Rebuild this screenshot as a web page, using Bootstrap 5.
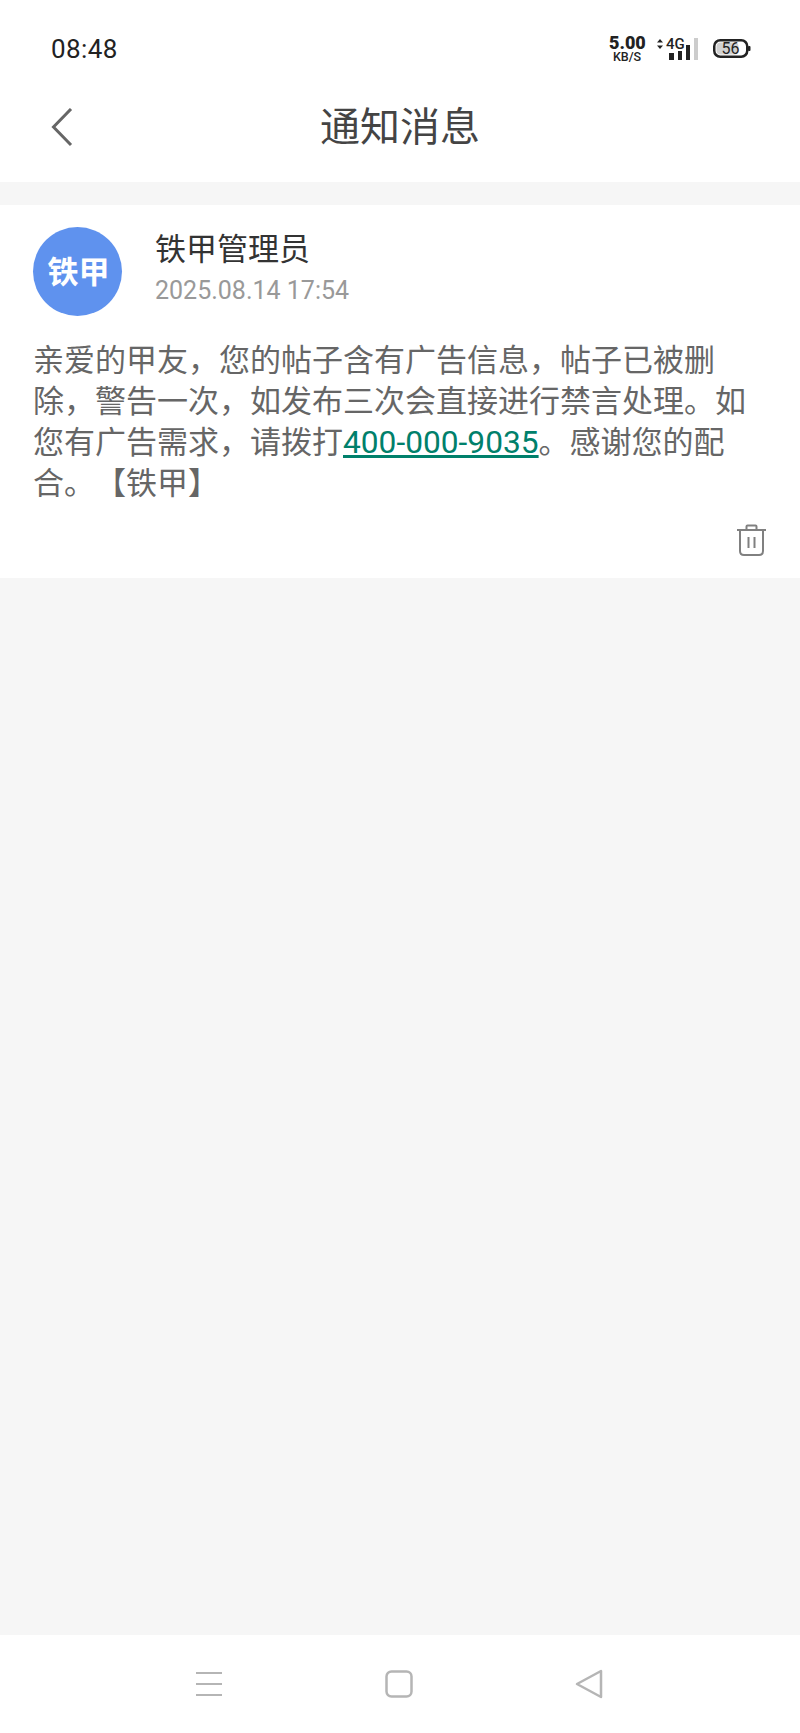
<!DOCTYPE html>
<html lang="zh-CN">
<head>
  <meta charset="UTF-8">
  <meta name="viewport" content="width=device-width, initial-scale=1.0">
  <title>通知消息</title>
  <link href="https://cdn.jsdelivr.net/npm/bootstrap@5.3.2/dist/css/bootstrap.min.css" rel="stylesheet">
  <script src="https://cdn.jsdelivr.net/npm/bootstrap@5.3.2/dist/js/bootstrap.bundle.min.js"></script>
  <style>
    html, body { height: 100%; }
    body {
      background: #f6f6f6;
      font-family: Roboto, "Noto Sans CJK SC", sans-serif;
      color: #333;
    }
    .phone { height: 1733px; }

    /* status bar */
    .status-bar { height: 82px; padding: 32px 48px 0 51px; }
    .status-time { font-size: 26px; line-height: 34px; color: #222; letter-spacing: .4px; }
    .net-speed { width: 36px; margin: 3px 10px 0 0; text-align: center; color: #222; font-weight: 700; }
    .net-speed b { display: block; font-size: 18px; line-height: 15px; }
    .net-speed span { display: block; font-size: 12.5px; line-height: 13px; font-weight: 500; }
    .batt-icon { margin-left: 13px; }

    /* header */
    .page-head { height: 100px; }
    .head-side { flex: 1 1 0; }
    .back-btn { display: block; padding: 26px 0 0 51px; line-height: 0; }
    .page-title { font-size: 40px; line-height: 50px; color: #444; font-weight: 400; margin: 0; padding-top: 21px; }

    /* message */
    .msg-panel { margin-top: 23px; height: 373px; padding: 22px 33px 0; }
    .avatar-dot {
      width: 89px; height: 89px; border-radius: 50%;
      background: #5f92ee; color: #fff;
      font-size: 31px; font-weight: 700;
      padding: 3px 0 0 2px;
    }
    .sender-box { margin-left: 33px; }
    .sender-name { font-size: 31px; line-height: 40px; color: #333; margin-top: 3px; }
    .sender-date { font-size: 25px; line-height: 32px; color: #999; margin-top: 5px; }
    .msg-text { font-size: 31px; line-height: 41px; color: #666; margin: 24px 0 0; text-spacing-trim: space-all; }
    .msg-text a { color: #00806b; font-size: 31.7px; }
    .trash-row { margin-top: 20px; line-height: 0; }

    /* bottom bar */
    .sys-nav { height: 98px; padding: 0 197px 0 195px; }
  </style>
</head>
<body>
  <div class="phone d-flex flex-column">
    <div class="bg-white">
      <div class="status-bar d-flex justify-content-between align-items-start">
        <div class="status-time">08:48</div>
        <div class="d-flex align-items-start">
          <div class="net-speed"><b>5.00</b><span>KB/S</span></div>
          <svg width="44" height="30" viewBox="0 0 44 30">
            <path d="M2 10.500 5 7 8 10.500ZM2 13.500 5 17 8 13.500Z" fill="#222"/>
            <text x="11" y="17" font-family="Roboto" font-size="15" font-weight="500" fill="#222">4G</text>
            <rect x="14" y="21" width="5" height="7" fill="#222"/>
            <rect x="23" y="19" width="4" height="9" fill="#222"/>
            <rect x="31" y="13" width="4" height="15" fill="#222"/>
            <rect x="39" y="6" width="4" height="22" fill="#ccc"/>
          </svg>
          <svg class="batt-icon" width="40" height="30" viewBox="0 0 40 30">
            <rect x="2.250" y="8.250" width="33" height="16.500" rx="6" fill="#fff" stroke="#222" stroke-width="2.500"/>
            <rect x="4.500" y="10.500" width="22" height="12" rx="4" fill="#d2d2d2"/>
            <rect x="36" y="14" width="2.500" height="5" rx="1" fill="#222"/>
            <text x="18.500" y="22" text-anchor="middle" font-family="Roboto" font-size="16" fill="#222">56</text>
          </svg>
        </div>
      </div>
      <div class="page-head d-flex align-items-start">
        <div class="head-side">
          <a class="back-btn" href="#">
            <svg width="24" height="40" viewBox="0 0 24 40"><path d="M20 1 2.500 19 20 37" fill="none" stroke="#666" stroke-width="3"/></svg>
          </a>
        </div>
        <h1 class="page-title">通知消息</h1>
        <div class="head-side"></div>
      </div>
    </div>

    <div class="msg-panel bg-white">
      <div class="d-flex align-items-start">
        <div class="avatar-dot d-flex align-items-center justify-content-center flex-shrink-0">铁甲</div>
        <div class="sender-box">
          <div class="sender-name">铁甲管理员</div>
          <div class="sender-date">2025.08.14 17:54</div>
        </div>
      </div>
      <p class="msg-text">亲爱的甲友，您的帖子含有广告信息，帖子已被删除，警告一次，如发布三次会直接进行禁言处理。如您有广告需求，请拨打<a href="#">400-000-9035</a>。感谢您的配合。【铁甲】</p>
      <div class="trash-row d-flex justify-content-end">
        <svg width="31" height="32" viewBox="0 0 31 32" fill="none" stroke="#808080" stroke-width="2">
          <path d="M1 6H30M10.500 6V2.500Q10.500 1.500 11.500 1.500H19.500Q20.500 1.500 20.500 2.500V6"/>
          <path d="M4 6V27Q4 31 8 31H23Q27 31 27 27V6"/>
          <path d="M12.500 13V24M18.500 13V24"/>
        </svg>
      </div>
    </div>

    <div class="flex-grow-1"></div>

    <div class="sys-nav bg-white d-flex justify-content-between align-items-center">
      <svg width="28" height="26" viewBox="0 0 28 26" fill="none" stroke="#b5b5b5" stroke-width="2">
        <path d="M1 2H27M1 13H27M1 24H27"/>
      </svg>
      <svg width="28" height="28" viewBox="0 0 28 28" fill="none" stroke="#b5b5b5" stroke-width="2.500">
        <rect x="1.500" y="1.500" width="25" height="25" rx="5"/>
      </svg>
      <svg width="28" height="30" viewBox="0 0 28 30" fill="none" stroke="#b5b5b5" stroke-width="2.500" stroke-linejoin="round">
        <path d="M2 15 26 2V28Z"/>
      </svg>
    </div>
  </div>
</body>
</html>
